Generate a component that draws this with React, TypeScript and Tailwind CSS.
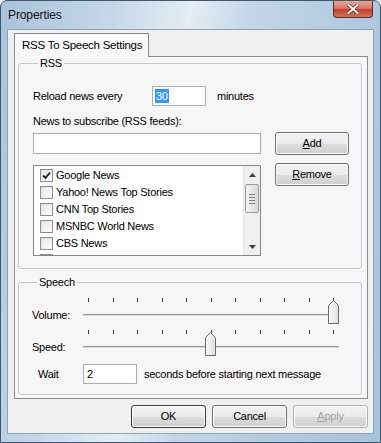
import React from "react";

const font = { fontFamily: '"Liberation Sans", Arial, sans-serif' };

const feeds = [
  { name: "Google News", checked: true },
  { name: "Yahoo! News Top Stories", checked: false },
  { name: "CNN Top Stories", checked: false },
  { name: "MSNBC World News", checked: false },
  { name: "CBS News", checked: false },
  { name: "ABC News", checked: false },
];

function Button({ children, w = "w-[75px]", disabled = false, primary = false }: { children: React.ReactNode; w?: string; disabled?: boolean; primary?: boolean }) {
  return (
    <button
      type="button"
      className={`${w} h-[23px] rounded-[3px] border ${primary ? "border-[#3c3c3c]" : "border-[#707070]"} bg-[linear-gradient(#f3f3f3_0%,#ebebeb_50%,#dddddd_51%,#cfcfcf_100%)] text-[11px] leading-none ${disabled ? "text-[#a0a0a0] border-[#adb2b5]" : "text-black"} shadow-[inset_0_0_0_1px_#fcfcfc]`}
    >
      {children}
    </button>
  );
}

function CheckBox({ checked }: { checked: boolean }) {
  return (
    <div className="w-[13px] h-[13px] border border-[#8e8f8f] bg-[linear-gradient(135deg,#dcdcdc,#ffffff)] flex items-center justify-center shrink-0">
      <div className="w-[9px] h-[9px] bg-[linear-gradient(135deg,#e8e8e8,#fafafa)] flex items-center justify-center">
        {checked && (
          <svg width="9" height="9" viewBox="0 0 9 9">
            <path d="M1 4.5 L3.5 7 L8 1.5" stroke="#1a1a1a" strokeWidth="1.8" fill="none" />
          </svg>
        )}
      </div>
    </div>
  );
}

function Slider({ value }: { value: number }) {
  const ticks = Array.from({ length: 11 }, (_, i) => i);
  const tickX = (i: number) => 5 + i * 24.5;
  return (
    <div className="relative w-[262px] h-[27px]">
      {ticks.map((i) => (
        <div key={i} className="absolute top-0 w-[1px] h-[4px] bg-[#3a3a3a]" style={{ left: tickX(i) }} />
      ))}
      <div className="absolute left-0 top-[16px] w-[256px] h-[3px] border-t border-[#9a9a9a] border-b border-b-white bg-[#d6d6d6]" />
      <svg className="absolute top-[2px]" style={{ left: tickX(value) - 5.5 }} width="12" height="24" viewBox="0 0 12 24">
        <defs>
          <linearGradient id={`g${value}`} x1="0" x2="1">
            <stop offset="0" stopColor="#fbfbfb" />
            <stop offset="1" stopColor="#dedede" />
          </linearGradient>
        </defs>
        <path d="M0.5 5.5 L5.5 0.5 L10.5 5.5 L10.5 23.5 L0.5 23.5 Z" fill={`url(#g${value})`} stroke="#6c6c6c" />
      </svg>
    </div>
  );
}

export default function App() {
  return (
    <div style={font} className="w-[381px] h-[443px] overflow-hidden rounded-t-[7px] border border-[#3d5672] bg-[linear-gradient(100deg,#a9c3da_0%,#c6d8e8_25%,#e4edf5_42%,#c4d7e7_55%,#b3cbe0_75%,#a7c3dc_100%)] flex flex-col text-[11px] tracking-[-0.25px] text-black">
      <div className="h-[28px] flex items-start shrink-0">
        <div className="ml-[7px] mt-[5px] text-[12px] tracking-[-0.1px] text-[#111]">Properties</div>
        <div className="ml-auto mr-[7px] mt-0 w-[40px] h-[17px] rounded-b-[4px] border border-t-0 border-[#5b2a2a] bg-[linear-gradient(#e8a795_0%,#d67a6a_45%,#c2412b_55%,#d8705a_100%)] flex items-center justify-center">
          <svg width="12" height="10" viewBox="0 0 12 10">
            <path d="M1.5 1 L10.5 9 M10.5 1 L1.5 9" stroke="#6e2a20" strokeWidth="3.4" strokeLinecap="square" />
            <path d="M1.5 1 L10.5 9 M10.5 1 L1.5 9" stroke="#ffffff" strokeWidth="2" strokeLinecap="square" />
          </svg>
        </div>
      </div>

      <div className="mx-[6px] h-[405px] border border-[#8ea3b6] bg-[#f0f0f0] flex flex-col pl-[6px] pt-[3px]">
        <div className="flex">
          <div className="relative z-10 w-[135px] h-[24px] border border-b-0 border-[#898c95] bg-[#f9f9f9] flex items-center pl-[7px] text-[11.5px] whitespace-nowrap">
            RSS To Speech Settings
          </div>
        </div>
        <div className="-mt-[1px] w-[354px] h-[343px] border border-[#898c95] bg-[#f6f6f6] pl-[3px] flex flex-col">
          <fieldset className="w-[344px] h-[212px] border border-[#c5c5c5] rounded-[3px] pl-[14px] shadow-[1px_1px_0_#ffffff]">
            <legend className="ml-[5px] px-[2px] leading-[13px] text-[11px]">RSS</legend>
            <div className="flex items-center h-[20px] mt-[16px]">
              <span className="w-[119px]">Reload news every</span>
              <div className="w-[54px] h-[20px] border border-[#abadb3] bg-white flex items-center pl-[2px]">
                <span className="bg-[#3399ff] text-white px-[1px] leading-[14px]">30</span>
              </div>
              <span className="ml-[11px]">minutes</span>
            </div>
            <div className="mt-[8px] h-[14px] leading-[14px]">News to subscribe (RSS feeds):</div>
            <div className="flex items-start mt-[4px] h-[22px]">
              <div className="mt-[1px] w-[228px] h-[21px] border border-[#abadb3] bg-white" />
              <div className="ml-[14px]">
                <Button w="w-[74px]"><span className="underline">A</span>dd</Button>
              </div>
            </div>
            <div className="flex items-start mt-[9px]">
              <div className="mt-[2px] w-[228px] h-[91px] border border-[#828790] bg-white flex overflow-hidden">
                <div className="flex-1 flex flex-col pt-[1px] pl-[6px]">
                  {feeds.map((f) => (
                    <div key={f.name} className="h-[17px] shrink-0 flex items-center gap-[3px]">
                      <CheckBox checked={f.checked} />
                      <span className="whitespace-nowrap">{f.name}</span>
                    </div>
                  ))}
                </div>
                <div className="w-[17px] h-full bg-[#f0f0f0] border-l border-[#e6e6e6] flex flex-col items-center">
                  <div className="h-[17px] flex items-center justify-center">
                    <svg width="7" height="4" viewBox="0 0 7 4"><path d="M0 4 L3.5 0 L7 4 Z" fill="#3c3c3c" /></svg>
                  </div>
                  <div className="mt-[1px] w-[14px] h-[29px] rounded-[2px] border border-[#9a9a9a] bg-[linear-gradient(90deg,#f4f4f4,#dadada)] flex flex-col items-center justify-center gap-[2px]">
                    <div className="w-[6px] h-[1px] bg-[#7a7a7a]" />
                    <div className="w-[6px] h-[1px] bg-[#7a7a7a]" />
                    <div className="w-[6px] h-[1px] bg-[#7a7a7a]" />
                    <div className="w-[6px] h-[1px] bg-[#7a7a7a]" />
                  </div>
                  <div className="mt-auto h-[17px] flex items-center justify-center">
                    <svg width="7" height="4" viewBox="0 0 7 4"><path d="M0 0 L3.5 4 L7 0 Z" fill="#3c3c3c" /></svg>
                  </div>
                </div>
              </div>
              <div className="ml-[14px]">
                <Button w="w-[74px]"><span className="underline">R</span>emove</Button>
              </div>
            </div>
          </fieldset>

          <fieldset className="mt-[7px] w-[344px] h-[119px] border border-[#c5c5c5] rounded-[3px] pl-[13px] shadow-[1px_1px_0_#ffffff]">
            <legend className="ml-[5px] px-[2px] leading-[13px] text-[11px]">Speech</legend>
            <div className="mt-[9px] flex items-start">
              <span className="w-[51px] mt-[9px]">Volume:</span>
              <Slider value={10} />
            </div>
            <div className="mt-[5px] flex items-start">
              <span className="w-[51px] mt-[9px]">Speed:</span>
              <Slider value={5} />
            </div>
            <div className="mt-[7px] flex items-center">
              <span className="w-[51px] pl-[6px]">Wait</span>
              <div className="w-[54px] h-[20px] border border-[#abadb3] bg-white flex items-center pl-[3px]">2</div>
              <span className="ml-[7px]">seconds before starting next message</span>
            </div>
          </fieldset>
        </div>

        <div className="mt-[6px] w-[354px] flex justify-end gap-[6px]">
          <Button primary>OK</Button>
          <Button>Cancel</Button>
          <Button disabled><span className="underline">A</span>pply</Button>
        </div>
      </div>
    </div>
  );
}
